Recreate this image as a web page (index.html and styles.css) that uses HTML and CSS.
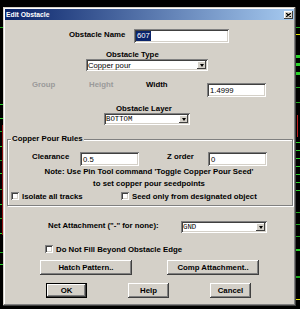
FILE: index.html
```html
<!doctype html>
<html>
	<head>
		<title>Edit Obstacle</title>
		<meta charset="utf8">
		<link rel="stylesheet" href="styles.css">
	</head>
	<body>
		<svg class="pcb" width="300" height="309">
			<rect x="0" y="27" width="4" height="1" fill="#1fa81f"/>
			<rect x="0" y="104" width="3" height="1" fill="#2bd12b"/>
			<rect x="0" y="118" width="3" height="1" fill="#2bd12b"/>
			<rect x="0" y="131" width="3" height="1" fill="#1fa81f"/>
			<rect x="0" y="146" width="3" height="1" fill="#2bd12b"/>
			<rect x="0" y="160" width="3" height="1" fill="#1fa81f"/>
			<rect x="0" y="173" width="3" height="1" fill="#2bd12b"/>
			<rect x="0" y="189" width="3" height="1" fill="#1fa81f"/>
			<rect x="0" y="204" width="3" height="1" fill="#2bd12b"/>
			<rect x="0" y="218" width="3" height="1" fill="#1fa81f"/>
			<rect x="0" y="233" width="3" height="1" fill="#2bd12b"/>
			<rect x="0" y="252" width="3" height="1" fill="#1fa81f"/>
			<rect x="0" y="264" width="3" height="1" fill="#2bd12b"/>
			<rect x="2" y="125" width="1" height="110" fill="#8a1010"/>
			<rect x="296" y="27" width="4" height="1" fill="#1fa81f"/>
			<rect x="296" y="34" width="4" height="1" fill="#e8e800"/>
			<rect x="296" y="55" width="4" height="3" fill="#2bd12b"/>
			<rect x="296" y="63" width="4" height="3" fill="#2bd12b"/>
			<rect x="296" y="72" width="4" height="3" fill="#2bd12b"/>
			<rect x="296" y="87" width="4" height="1" fill="#1fa81f"/>
			<rect x="296" y="102" width="4" height="1" fill="#1fa81f"/>
			<rect x="297" y="115" width="1" height="22" fill="#c02020"/>
			<rect x="296" y="142" width="4" height="1" fill="#2bd12b"/>
			<rect x="296" y="150" width="4" height="1" fill="#2bd12b"/>
			<rect x="296" y="158" width="4" height="1" fill="#2bd12b"/>
			<rect x="296" y="166" width="4" height="1" fill="#2bd12b"/>
			<rect x="296" y="174" width="4" height="1" fill="#2bd12b"/>
			<rect x="296" y="182" width="4" height="1" fill="#2bd12b"/>
			<rect x="296" y="190" width="4" height="1" fill="#2bd12b"/>
			<rect x="296" y="212" width="4" height="1" fill="#1fa81f"/>
			<rect x="296" y="224" width="4" height="1" fill="#1fa81f"/>
			<rect x="296" y="236" width="4" height="1" fill="#1fa81f"/>
			<rect x="296" y="249" width="4" height="2" fill="#2bd12b"/>
			<rect x="296" y="276" width="4" height="2" fill="#1fa81f"/>
			<rect x="296" y="299" width="4" height="1" fill="#e8e800"/>
		</svg>
		<div class="dialog">
			<div class="titlebar">
				<span>Edit Obstacle</span>
				<span class="close">
					<svg width="5" height="4"><path d="M0 0L5 4M5 0L0 4" stroke="#000" stroke-width="1.2"/></svg>
				</span>
			</div>

			<div class="row r-name">
				<span class="lbl w-name">Obstacle Name</span>
				<span class="input w-name-in"><span class="sel-text">607</span></span>
			</div>

			<div class="caption c-type">Obstacle Type</div>
			<div class="row r-type">
				<span class="select w-type"><span class="val">Copper pour</span><span class="arrow"></span></span>
			</div>

			<div class="row r-size">
				<span class="lbl off w-group">Group</span>
				<span class="lbl off w-group">Height</span>
				<span class="lbl w-width">Width</span>
				<span class="input w-num size-in">1.4999</span>
			</div>

			<div class="caption c-layer">Obstacle Layer</div>
			<div class="row r-layer">
				<span class="select w-layer"><span class="val mono">BOTTOM</span><span class="arrow"></span></span>
			</div>

			<div class="group">
				<span class="legend">Copper Pour Rules</span>
				<div class="row r-clear">
					<span class="lbl w-clear">Clearance</span>
					<span class="input w-num">0.5</span>
					<span class="lbl w-z">Z order</span>
					<span class="input w-num">0</span>
				</div>
				<div class="note">
					Note: Use Pin Tool command 'Toggle Copper Pour Seed'<br>
					to set copper pour seedpoints
				</div>
				<div class="row r-checks">
					<span class="check w-iso"><span class="box"></span>Isolate all tracks</span>
					<span class="check"><span class="box"></span>Seed only from designated object</span>
				</div>
			</div>

			<div class="row r-net">
				<span class="lbl w-net">Net Attachment ("-" for none):</span>
				<span class="select w-layer"><span class="val mono">GND</span><span class="arrow"></span></span>
			</div>

			<div class="row r-fill">
				<span class="check"><span class="box"></span>Do Not Fill Beyond Obstacle Edge</span>
			</div>

			<div class="row r-btn1">
				<span class="button w-wide">Hatch Pattern..</span>
				<span class="button w-wide">Comp Attachment..</span>
			</div>

			<div class="row r-btn2">
				<span class="button default w-small">OK</span>
				<span class="button w-small">Help</span>
				<span class="button w-small">Cancel</span>
			</div>
		</div>
	</body>
</html>
```

FILE: styles.css
```css
* {
	margin: 0;
	padding: 0;
	box-sizing: border-box;
}
html,body {
	background-color: #000;
	width: 300px;
	height: 309px;
	overflow: hidden;
	font-family: "Liberation Sans", Arial, sans-serif;
	font-size: 7.8px;
	font-weight: bold;
	color: #000;
}
body {
	position: relative;
	padding: 7px 4px 0 3px;
}
.pcb {
	position: absolute;
	left: 0;
	top: 0;
}
.dialog {
	position: relative;
	width: 293px;
	height: 299px;
	padding: 2px;
	background: #d4d0c8;
	box-shadow:
		inset -1px -1px #404040,
		inset 1px 1px #d4d0c8,
		inset -2px -2px #808080,
		inset 2px 2px #fff;
}
.titlebar {
	height: 11px;
	display: flex;
	align-items: center;
	justify-content: space-between;
	padding: 0 1px;
	background: linear-gradient(to right, #0a246a, #a6caf0);
	color: #fff;
	font-size: 6.8px;
}
.close {
	width: 9px;
	height: 8px;
	display: flex;
	align-items: center;
	justify-content: center;
	background: #d4d0c8;
	box-shadow: inset -1px -1px #404040, inset 1px 1px #fff;
}
.close svg {
	display: block;
}
.row {
	display: flex;
	align-items: flex-start;
}
.lbl {
	line-height: 9px;
	white-space: nowrap;
}
.off {
	color: #9a9a9a;
}
.caption {
	height: 9px;
	line-height: 9px;
}
.input, .select {
	display: flex;
	align-items: center;
	height: 14px;
	background: #fff;
	font-weight: normal;
	font-size: 7.7px;
	padding-left: 3px;
	box-shadow:
		inset 1px 1px #808080,
		inset -1px -1px #fff,
		inset 2px 2px #404040,
		inset -2px -2px #d4d0c8;
}
.select {
	height: 12px;
	padding-left: 2px;
	justify-content: space-between;
}
.mono {
	font-family: "Liberation Mono", "Courier New", monospace;
	font-size: 7.3px;
}
.arrow {
	width: 9px;
	height: 8px;
	margin-right: 2px;
	display: flex;
	align-items: center;
	justify-content: center;
	background: #d4d0c8;
	box-shadow:
		inset -1px -1px #404040,
		inset 1px 1px #fff;
}
.arrow::after {
	content: "";
	border-left: 2.5px solid transparent;
	border-right: 2.5px solid transparent;
	border-top: 3px solid #000;
}
.sel-text {
	background: #0a246a;
	color: #fff;
	line-height: 10px;
	padding: 0 1px;
	margin-left: -1px;
}
.r-name {
	margin-top: 9px;
	padding-left: 64px;
}
.r-name .lbl {
	line-height: 11px;
}
.w-name {
	width: 65px;
}
.w-name-in {
	width: 95px;
}
.c-type {
	margin-top: 7px;
	padding-left: 101px;
}
.r-type {
	padding-left: 81px;
}
.w-type {
	width: 122px;
}
.r-size {
	margin-top: 9px;
	padding-left: 27px;
}
.w-group {
	width: 57px;
}
.w-width {
	width: 61px;
}
.size-in {
	margin-top: 3px;
}
.w-num {
	width: 59px;
}
.c-layer {
	margin-top: 7px;
	padding-left: 111px;
}
.r-layer {
	padding-left: 99px;
}
.w-layer {
	width: 86px;
}
.group {
	position: relative;
	margin: 14px 1px 0 2px;
	padding: 12px 0 4px;
	border: 1px solid #808080;
	box-shadow: inset 1px 1px #fff, 1px 1px #fff;
}
.legend {
	position: absolute;
	top: -6px;
	left: 3px;
	padding: 0 1px;
	line-height: 9px;
	background: #d4d0c8;
}
.r-clear {
	padding-left: 24px;
}
.w-clear {
	width: 48px;
}
.w-z {
	width: 69px;
	padding-left: 28px;
}
.note {
	text-align: center;
	line-height: 12px;
	padding-right: 2px;
}
.r-checks {
	margin-top: 2px;
	padding-left: 3px;
}
.check {
	display: flex;
	align-items: flex-start;
	gap: 3px;
	line-height: 9px;
	white-space: nowrap;
}
.box {
	width: 8px;
	height: 8px;
	background: #fff;
	box-shadow:
		inset 1px 1px #808080,
		inset -1px -1px #fff,
		inset 2px 2px #404040,
		inset -2px -2px #d4d0c8;
}
.w-iso {
	width: 110px;
}
.r-net {
	margin-top: 15px;
	padding-left: 43px;
}
.w-net {
	width: 133px;
}
.r-fill {
	margin-top: 12px;
	padding-left: 40px;
}
.button {
	height: 15px;
	display: flex;
	align-items: center;
	justify-content: center;
	background: #d4d0c8;
	box-shadow:
		inset -1px -1px #404040,
		inset 1px 1px #fff,
		inset -2px -2px #808080,
		inset 2px 2px #d4d0c8;
}
.default {
	border: 1px solid #000;
}
.r-btn1 {
	margin-top: 6px;
	padding-left: 35px;
	gap: 35px;
}
.w-wide {
	width: 92px;
}
.r-btn2 {
	margin-top: 8px;
	padding-left: 41px;
	gap: 41px;
}
.w-small {
	width: 41px;
}
```
